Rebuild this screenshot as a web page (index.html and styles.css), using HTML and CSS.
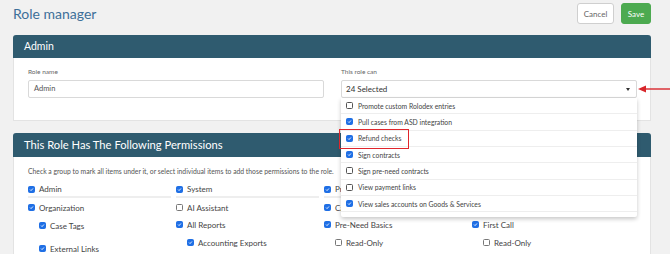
FILE: index.html
```html
<!DOCTYPE html>
<html lang="en">
<head>
    <meta charset="UTF-8">
    <meta name="viewport" content="width=device-width, initial-scale=1.0">
    <title>Role manager</title>
    <link rel="stylesheet" href="styles.css">
</head>
<body>

    <div class="page">
        <div class="topbar">
            <h1 class="title">Role manager</h1>
            <div class="actions">
                <button class="btn btn-cancel">Cancel</button>
                <button class="btn btn-save">Save</button>
            </div>
        </div>

        <div class="card">
            <div class="card-head">Admin</div>
            <div class="card-body fields">
                <div class="field">
                    <label>Role name</label>
                    <div class="input">Admin</div>
                </div>
                <div class="field field-can">
                    <label>This role can</label>
                    <div class="input select">
                        24 Selected
                        <span class="caret"></span>
                        <svg class="pointer" width="32" height="8" viewBox="0 0 32 8">
                            <polygon points="0,4 8,0.5 8,7.5" fill="#d8262b"/>
                            <line x1="7" y1="4" x2="32" y2="4" stroke="#d8262b" stroke-width="1.4"/>
                        </svg>
                    </div>

                    <!-- open multi-select list -->
                    <div class="menu">
                        <div class="menu-item"><span class="cb"></span>Promote custom Rolodex entries</div>
                        <div class="menu-item"><span class="cb on"><svg viewBox="0 0 8 8"><path d="M1.7 4.1l1.6 1.6 3-3.3"/></svg></span>Pull cases from ASD integration</div>
                        <div class="menu-item"><span class="highlight"></span><span class="cb on"><svg viewBox="0 0 8 8"><path d="M1.7 4.1l1.6 1.6 3-3.3"/></svg></span>Refund checks</div>
                        <div class="menu-item"><span class="cb on"><svg viewBox="0 0 8 8"><path d="M1.7 4.1l1.6 1.6 3-3.3"/></svg></span>Sign contracts</div>
                        <div class="menu-item"><span class="cb"></span>Sign pre-need contracts</div>
                        <div class="menu-item"><span class="cb"></span>View payment links</div>
                        <div class="menu-item"><span class="cb on"><svg viewBox="0 0 8 8"><path d="M1.7 4.1l1.6 1.6 3-3.3"/></svg></span>View sales accounts on Goods &amp; Services</div>
                    </div>
                </div>
            </div>
        </div>

        <div class="card">
            <div class="card-head card-head-lg">This Role Has The Following Permissions</div>
            <div class="card-body">
                <p class="hint">Check a group to mark all items under it, or select individual items to add those permissions to the role.</p>

                <div class="perm-grid">
                    <div class="perm-col">
                        <div class="perm first"><span class="cb on"><svg viewBox="0 0 8 8"><path d="M1.7 4.1l1.6 1.6 3-3.3"/></svg></span>Admin</div>
                        <div class="perm"><span class="cb on"><svg viewBox="0 0 8 8"><path d="M1.7 4.1l1.6 1.6 3-3.3"/></svg></span>Organization</div>
                        <div class="perm sub"><span class="cb on"><svg viewBox="0 0 8 8"><path d="M1.7 4.1l1.6 1.6 3-3.3"/></svg></span>Case Tags</div>
                        <div class="perm sub"><span class="cb on"><svg viewBox="0 0 8 8"><path d="M1.7 4.1l1.6 1.6 3-3.3"/></svg></span>External Links</div>
                    </div>
                    <div class="perm-col">
                        <div class="perm first"><span class="cb on"><svg viewBox="0 0 8 8"><path d="M1.7 4.1l1.6 1.6 3-3.3"/></svg></span>System</div>
                        <div class="perm"><span class="cb"></span>AI Assistant</div>
                        <div class="perm"><span class="cb on"><svg viewBox="0 0 8 8"><path d="M1.7 4.1l1.6 1.6 3-3.3"/></svg></span>All Reports</div>
                        <div class="perm sub"><span class="cb on"><svg viewBox="0 0 8 8"><path d="M1.7 4.1l1.6 1.6 3-3.3"/></svg></span>Accounting Exports</div>
                    </div>
                    <div class="perm-col">
                        <div class="perm first"><span class="cb on"><svg viewBox="0 0 8 8"><path d="M1.7 4.1l1.6 1.6 3-3.3"/></svg></span>Pricing</div>
                        <div class="perm"><span class="cb on"><svg viewBox="0 0 8 8"><path d="M1.7 4.1l1.6 1.6 3-3.3"/></svg></span>Cases</div>
                        <div class="perm"><span class="cb on"><svg viewBox="0 0 8 8"><path d="M1.7 4.1l1.6 1.6 3-3.3"/></svg></span>Pre-Need Basics</div>
                        <div class="perm sub"><span class="cb"></span>Read-Only</div>
                    </div>
                    <div class="perm-col">
                        <div class="perm first"><span class="cb on"><svg viewBox="0 0 8 8"><path d="M1.7 4.1l1.6 1.6 3-3.3"/></svg></span>Contacts</div>
                        <div class="perm"><span class="cb on"><svg viewBox="0 0 8 8"><path d="M1.7 4.1l1.6 1.6 3-3.3"/></svg></span>Calendar</div>
                        <div class="perm"><span class="cb on"><svg viewBox="0 0 8 8"><path d="M1.7 4.1l1.6 1.6 3-3.3"/></svg></span>First Call</div>
                        <div class="perm sub"><span class="cb"></span>Read-Only</div>
                    </div>
                </div>
            </div>
        </div>
    </div>

</body>
</html>
```

FILE: styles.css
```css
body {
    margin: 0;
    font-family: Lato, "Open Sans", Arial, sans-serif;
    background-color: #f1f1f1;
    color: #444;
    overflow: hidden;
}
.page {
    padding: 3px 19px 0 13px;
}

/* top bar */
.topbar {
    display: flex;
    justify-content: space-between;
    align-items: flex-start;
    height: 21px;
    margin-bottom: 11px;
}
.title {
    margin: 2px 0 0;
    font-size: 14px;
    font-weight: 400;
    color: #3d6f99;
    line-height: 18px;
}
.actions {
    display: flex;
    gap: 7px;
}
.btn {
    height: 21px;
    padding: 0;
    font-family: inherit;
    font-size: 8px;
    border-radius: 3px;
    cursor: pointer;
}
.btn-cancel {
    width: 37px;
    background-color: #fff;
    border: 1px solid #cfcfcf;
    color: #666;
}
.btn-save {
    width: 30px;
    background-color: #4caa50;
    border: 1px solid #4caa50;
    color: #fff;
}

/* cards */
.card {
    background-color: #fff;
    border: 1px solid #e3e3e3;
    border-top: none;
    border-radius: 3px 3px 0 0;
    margin-bottom: 12px;
}
.card-head {
    height: 23px;
    line-height: 23px;
    padding-left: 11px;
    margin: 0 -1px;
    background-color: #2f5b6f;
    color: #fff;
    font-size: 10.5px;
    border-radius: 3px 3px 0 0;
}
.card-head-lg {
    height: 24px;
    line-height: 24px;
    font-size: 11.2px;
}
.card-body {
    padding: 9px 13px 22px 14px;
}

/* admin fields */
.fields {
    display: grid;
    grid-template-columns: 1fr 1fr;
    gap: 17px;
}
.field label {
    display: block;
    font-size: 6.5px;
    color: #666;
    line-height: 9px;
    margin-bottom: 4px;
}
.field-can {
    position: relative;
}
.input {
    height: 18px;
    box-sizing: border-box;
    border: 1px solid #d9d9d9;
    border-radius: 2px;
    padding-left: 5px;
    font-size: 7.5px;
    line-height: 16px;
    color: #555;
}
.select {
    position: relative;
    display: flex;
    align-items: center;
    justify-content: space-between;
    padding: 0 6px 0 4px;
    font-size: 8px;
    color: #333;
}
.caret {
    width: 0;
    height: 0;
    border-left: 2.5px solid transparent;
    border-right: 2.5px solid transparent;
    border-top: 3px solid #333;
}
.pointer {
    position: absolute;
    left: calc(100% + 2px);
    top: 4px;
}

/* dropdown */
.menu {
    position: absolute;
    z-index: 10;
    left: 0;
    right: 0;
    top: 100%;
    padding-bottom: 5px;
    background-color: #fff;
    box-shadow: 0 2px 4px rgba(0, 0, 0, 0.22);
    border-radius: 0 0 2px 2px;
}
.menu-item {
    position: relative;
    display: flex;
    align-items: center;
    gap: 5px;
    height: 16.33px;
    box-sizing: border-box;
    padding-left: 5px;
    border-bottom: 1px solid #eeeeee;
    font-size: 6.8px;
    color: #444;
}
.highlight {
    position: absolute;
    left: -2px;
    top: -2px;
    width: 70px;
    height: 20px;
    box-sizing: border-box;
    border: 1.5px solid #e0262c;
}

/* checkboxes */
.cb {
    flex: none;
    width: 7px;
    height: 7px;
    box-sizing: border-box;
    border: 1px solid #555;
    border-radius: 1.5px;
    background-color: #fff;
}
.cb.on {
    border-color: #1f6fe5;
    background-color: #1f6fe5;
}
.cb svg {
    display: block;
    width: 100%;
    height: 100%;
    fill: none;
    stroke: #fff;
    stroke-width: 1.4;
}

/* permissions */
.hint {
    margin: 1px 0 6px;
    font-size: 6.8px;
    line-height: 9px;
    color: #555;
    white-space: nowrap;
}
.perm-grid {
    display: grid;
    grid-template-columns: repeat(4, 143px);
    column-gap: 5px;
}
.perm {
    display: flex;
    align-items: center;
    gap: 4px;
    height: 17px;
    font-size: 8px;
    color: #444;
}
.perm.first {
    height: 14px;
    border-bottom: 2px solid #eeeeee;
    margin-bottom: 1px;
}
.perm.sub {
    padding-left: 11px;
    margin-top: 1px;
}
.perm.sub + .perm.sub {
    margin-top: 6px;
}
.perm .cb {
    border-color: #777;
}
.perm .cb.on {
    border-color: #1f6fe5;
}
```
